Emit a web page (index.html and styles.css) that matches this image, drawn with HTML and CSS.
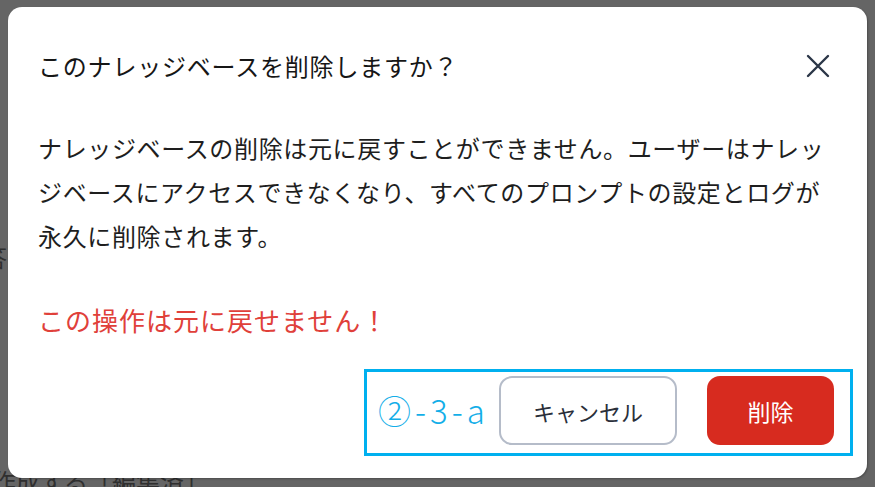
FILE: index.html
```html
<!DOCTYPE html>
<html lang="ja">
<head>
<meta charset="utf-8">
<link rel="stylesheet" href="styles.css">
</head>
<body>
<div class="backdrop">
  <span class="bg-text bg-left">答</span>
  <span class="bg-text bg-bottom">作成する「編集済」</span>
</div>
<div class="modal">
  <div class="modal-header">
    <h2 class="modal-title">このナレッジベースを削除しますか？</h2>
    <button class="close-btn" aria-label="close">
      <svg width="24" height="24" viewBox="0 0 24 24"><path d="M2 2 L22 22 M22 2 L2 22" stroke="#2b3647" stroke-width="2.4" stroke-linecap="round" fill="none"/></svg>
    </button>
  </div>
  <p class="modal-body">ナレッジベースの削除は元に戻すことができません。ユーザーはナレッジベースにアクセスできなくなり、すべてのプロンプトの設定とログが永久に削除されます。</p>
  <p class="warning">この操作は元に戻せません！</p>
  <div class="footer-wrap">
    <div class="footer">
      <span class="annot">②-3-a</span>
      <button class="btn btn-cancel">キャンセル</button>
      <button class="btn btn-delete">削除</button>
    </div>
  </div>
</div>
</body>
</html>
```

FILE: styles.css
```css
html, body {
  margin: 0;
  padding: 0;
}
body {
  width: 875px;
  height: 487px;
  background: #656565;
  overflow: hidden;
  position: relative;
  font-family: "Noto Sans CJK JP", "Noto Sans", sans-serif;
}
.backdrop {
  position: absolute;
  inset: 0;
}
.bg-text {
  position: absolute;
  color: #2f2f2f;
  font-size: 24px;
  line-height: 28px;
}
.bg-left {
  left: -17px;
  top: 243px;
}
.bg-bottom {
  left: -8px;
  top: 467px;
}
.modal {
  position: absolute;
  left: 8px;
  top: 7px;
  width: 859px;
  height: 471px;
  box-sizing: border-box;
  background: #fff;
  border-radius: 14px;
  box-shadow: 1px 1px 2px rgba(0,0,0,0.25);
  padding: 37px 0 0 30px;
  display: flex;
  flex-direction: column;
}
.modal-header {
  display: flex;
  align-items: center;
  justify-content: space-between;
  padding-right: 37px;
}
.modal-title {
  margin: 0;
  font-size: 24px;
  line-height: 44px;
  font-weight: 400;
  color: #161616;
  letter-spacing: 0.8px;
}
.close-btn {
  border: 0;
  background: none;
  padding: 0;
  width: 24px;
  height: 24px;
  display: flex;
}
.modal-body {
  margin: 38px 0 0 0;
  width: 800px;
  font-size: 24px;
  line-height: 44px;
  color: #1e1e1e;
  letter-spacing: 0.65px;
}
.warning {
  margin: 40px 0 0 0;
  font-size: 26px;
  line-height: 44px;
  color: #e0403a;
  letter-spacing: 1px;
}
.footer-wrap {
  display: flex;
  justify-content: flex-end;
  padding-right: 14px;
  margin-top: 27px;
}
.footer {
  border: 3px solid #00b0ef;
  width: 489px;
  height: 87px;
  box-sizing: border-box;
  display: flex;
  align-items: flex-start;
  padding: 4px 16px 0 11px;
}
.annot {
  color: #13aee8;
  font-size: 33px;
  font-weight: 300;
  line-height: 69px;
  letter-spacing: 4px;
  white-space: nowrap;
  flex: none;
}
.btn {
  font-family: "Noto Sans CJK JP", sans-serif;
  font-size: 22px;
  height: 69px;
  border-radius: 13px;
  cursor: pointer;
  flex: none;
}
.btn-cancel {
  width: 178px;
  margin-left: auto;
  background: #fff;
  border: 2px solid #b5bcc9;
  color: #2a2f3a;
}
.btn-delete {
  width: 127px;
  margin-left: 30px;
  background: #d72b1f;
  border: 0;
  color: #fff;
  font-size: 23px;
}
```
